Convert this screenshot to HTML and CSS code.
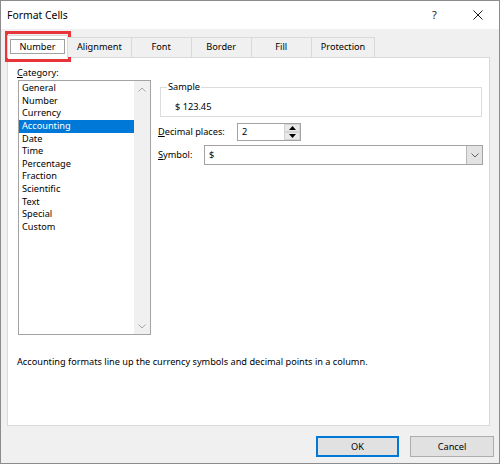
FILE: index.html
```html
<!DOCTYPE html>
<html lang="en">
<head>
<meta charset="utf-8">
<title>Format Cells</title>
<link rel="stylesheet" href="styles.css">
</head>
<body>
<div class="window">
  <div class="titlebar">
    <span class="title">Format Cells</span>
    <div class="caption">
      <span class="cap-btn help">?</span>
      <span class="cap-btn close">
        <svg width="10" height="10" viewBox="0 0 10 10"><path d="M0.5 0.5 L9.5 9.5 M9.5 0.5 L0.5 9.5" stroke="#000" stroke-width="0.9" fill="none"/></svg>
      </span>
    </div>
  </div>
  <div class="client">
    <div class="tabs">
      <div class="tab active"><span class="focus">Number</span></div>
      <div class="tab">Alignment</div>
      <div class="tab">Font</div>
      <div class="tab">Border</div>
      <div class="tab">Fill</div>
      <div class="tab">Protection</div>
    </div>
    <div class="panel">
      <div class="main">
        <div class="left">
          <div class="field-label"><u>C</u>ategory:</div>
          <div class="listbox">
            <ul class="items">
              <li>General</li>
              <li>Number</li>
              <li>Currency</li>
              <li class="selected">Accounting</li>
              <li>Date</li>
              <li>Time</li>
              <li>Percentage</li>
              <li>Fraction</li>
              <li>Scientific</li>
              <li>Text</li>
              <li>Special</li>
              <li>Custom</li>
            </ul>
            <div class="scrollbar">
              <span class="sb-btn"><svg width="8" height="5" viewBox="0 0 8 5"><path d="M0.5 4.5 L4 1 L7.5 4.5" stroke="#a6a6a6" stroke-width="1" fill="none"/></svg></span>
              <span class="sb-btn"><svg width="8" height="5" viewBox="0 0 8 5"><path d="M0.5 0.5 L4 4 L7.5 0.5" stroke="#a6a6a6" stroke-width="1" fill="none"/></svg></span>
            </div>
          </div>
        </div>
        <div class="right">
          <fieldset class="sample">
            <legend>Sample</legend>
            <div class="sample-value">$ 123.45</div>
          </fieldset>
          <div class="row decimal">
            <span class="row-label"><u>D</u>ecimal places:</span>
            <div class="spinbox">
              <span class="spin-value">2</span>
              <div class="spin">
                <span class="spin-btn"><svg width="7" height="4" viewBox="0 0 7 4"><path d="M0 4 L3.5 0 L7 4 Z" fill="#000"/></svg></span>
                <span class="spin-btn"><svg width="7" height="4" viewBox="0 0 7 4"><path d="M0 0 L3.5 4 L7 0 Z" fill="#000"/></svg></span>
              </div>
            </div>
          </div>
          <div class="row symbol">
            <span class="row-label"><u>S</u>ymbol:</span>
            <div class="combo">
              <span class="combo-value">$</span>
              <span class="combo-btn"><svg width="8" height="5" viewBox="0 0 8 5"><path d="M0.5 0.5 L4 4 L7.5 0.5" stroke="#606060" stroke-width="1" fill="none"/></svg></span>
            </div>
          </div>
        </div>
      </div>
      <p class="desc">Accounting formats line up the currency symbols and decimal points in a column.</p>
    </div>
    <div class="buttons">
      <button class="btn default">OK</button>
      <button class="btn">Cancel</button>
    </div>
  </div>
  <div class="annotation"></div>
</div>
</body>
</html>
```

FILE: styles.css
```css
html, body {
  margin: 0;
  padding: 0;
  background: #f0f0f0;
}

.window {
  position: relative;
  width: 500px;
  height: 464px;
  box-sizing: border-box;
  border: 1px solid #8c8c8c;
  background: #f0f0f0;
  font-family: "Noto Sans", "Open Sans", sans-serif;
  font-size: 9.2px;
  line-height: 12.65px;
  color: #000;
  overflow: hidden;
}

.titlebar {
  height: 28px;
  background: #fff;
  display: flex;
  align-items: center;
}

.title {
  padding-left: 6px;
  font-size: 10.4px;
}

.caption {
  margin-left: auto;
  display: flex;
}

.cap-btn {
  width: 43px;
  height: 28px;
  display: flex;
  align-items: center;
  justify-content: center;
}

.help {
  font-size: 11px;
  color: #222;
}

.client {
  padding: 8px 9px 0 6px;
}

.tabs {
  position: relative;
  z-index: 1;
  display: flex;
  align-items: flex-end;
  height: 20px;
}

.tab {
  box-sizing: border-box;
  min-width: 60px;
  height: 20px;
  padding: 0 9px;
  border-top: 1px solid #d9d9d9;
  border-right: 1px solid #d9d9d9;
  background: #f0f0f0;
  text-align: center;
  line-height: 18px;
}

.tab.active {
  width: 61px;
  height: 23px;
  margin-bottom: -1px;
  padding: 3px 1px 0;
  border-left: 1px solid #d9d9d9;
  background: #fff;
}

.focus {
  display: block;
  box-sizing: border-box;
  width: 55px;
  height: 15px;
  margin-left: 1px;
  border: 1px solid #a0a0a0;
  line-height: 13px;
}

.panel {
  box-sizing: border-box;
  height: 369px;
  border: 1px solid #d9d9d9;
  background: #fff;
  padding: 8px 6px 0 9px;
}

.main {
  display: grid;
  grid-template-columns: 134px 1fr;
  column-gap: 7px;
}

.left {
  display: flex;
  flex-direction: column;
}

.field-label {
  line-height: 13px;
  margin-bottom: 1px;
}

.listbox {
  box-sizing: border-box;
  width: 133px;
  height: 255px;
  margin-left: 1px;
  border: 1px solid #a3a3a3;
  display: flex;
}

.items {
  list-style: none;
  margin: 0;
  padding: 1px 0 0;
  width: 115px;
}

.items li {
  padding-left: 3px;
  height: 12.65px;
  white-space: nowrap;
}

.items li.selected {
  background: #0078d7;
  color: #fff;
}

.scrollbar {
  flex: 1;
  background: #f0f0f0;
  display: flex;
  flex-direction: column;
  justify-content: space-between;
}

.sb-btn {
  height: 16px;
  display: flex;
  align-items: center;
  justify-content: center;
}

.right {
  padding-top: 15px;
}

.sample {
  margin: 0 1px 0 2px;
  padding: 0 0 3px 14px;
  border: 1px solid #dcdcdc;
  min-inline-size: 0;
}

.sample legend {
  padding: 0 1px;
  margin-left: -8px;
}

.sample-value {
  margin-top: 7px;
}

.row {
  display: flex;
  align-items: center;
}

.decimal {
  margin-top: 6px;
  height: 18px;
}

.symbol {
  margin-top: 4px;
  height: 20px;
}

.decimal .row-label {
  width: 79px;
}

.symbol .row-label {
  width: 46px;
}

.spinbox {
  box-sizing: border-box;
  width: 64px;
  height: 18px;
  border: 1px solid #a3a3a3;
  display: flex;
}

.spin-value {
  flex: 1;
  padding-left: 4px;
  line-height: 16px;
}

.spin {
  width: 16px;
  display: flex;
  flex-direction: column;
}

.spin-btn {
  box-sizing: border-box;
  height: 8px;
  background: #e9e9e9;
  border: 1px solid #d4d4d4;
  display: flex;
  align-items: center;
  justify-content: center;
}

.combo {
  box-sizing: border-box;
  width: 279px;
  height: 20px;
  border: 1px solid #a3a3a3;
  display: flex;
}

.combo-value {
  flex: 1;
  padding-left: 4px;
  line-height: 18px;
}

.combo-btn {
  width: 16px;
  box-sizing: border-box;
  background: #e3e3e3;
  border-left: 1px solid #b8b8b8;
  display: flex;
  align-items: center;
  justify-content: center;
}

.desc {
  margin: 21px 0 0;
}

.buttons {
  display: flex;
  justify-content: flex-end;
  gap: 11px;
  margin-top: 10px;
  margin-right: -4px;
}

.btn {
  box-sizing: border-box;
  width: 84px;
  height: 21px;
  padding: 0;
  border: 1px solid #adadad;
  background: #e1e1e1;
  font-family: inherit;
  font-size: 9.2px;
  color: #000;
}

.btn.default {
  width: 83px;
  border: 2px solid #0078d7;
}

.annotation {
  position: absolute;
  left: 4px;
  top: 30px;
  width: 66px;
  height: 31px;
  box-sizing: border-box;
  border: 3px solid #e8353b;
  pointer-events: none;
}
```
